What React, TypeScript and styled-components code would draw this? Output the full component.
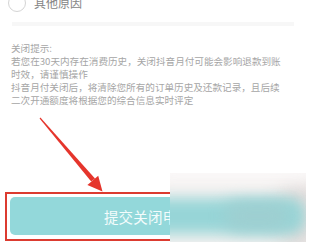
import React from "react";
import styled, { createGlobalStyle } from "styled-components";

const GlobalStyle = createGlobalStyle`
  html, body { margin: 0; padding: 0; background: #ffffff; }
  body { font-family: "Noto Sans CJK SC", "Noto Sans", sans-serif; }
`;

const Page = styled.div`
  position: relative;
  width: 306px;
  height: 242px;
  overflow: hidden;
  background: #ffffff;
  display: flex;
  flex-direction: column;
`;

const OptionRow = styled.div`
  display: flex;
  align-items: center;
  gap: 8px;
  margin-top: -7px;
  padding-left: 8px;
  height: 20px;
  flex-shrink: 0;
`;

const Radio = styled.span`
  width: 18px;
  height: 18px;
  border-radius: 50%;
  border: 1px solid #d4d4d4;
  box-sizing: border-box;
`;

const OptionLabel = styled.span`
  font-size: 12px;
  color: #858585;
  line-height: 20px;
`;

const Divider = styled.div`
  margin: 9px 12px 0;
  height: 4px;
  background: #f7f7f7;
  flex-shrink: 0;
`;

const Notice = styled.div`
  padding: 16px 0 0 11px;
  font-size: 9.6px;
  line-height: 13px;
  color: #a6a6a6;
  white-space: nowrap;
  flex-shrink: 0;
`;

const NoticePara = styled.p`
  margin: 0;
`;

const Highlight = styled.div`
  margin: auto 0 1px 5px;
  width: 286px;
  height: 49px;
  box-sizing: border-box;
  border: 2px solid #dc3b30;
  padding: 3px 3px 4px 3px;
  display: flex;
  flex-shrink: 0;
`;

const SubmitButton = styled.button`
  flex: 1;
  border: none;
  border-radius: 5px;
  background: #93d8da;
  color: #f4fcfc;
  font-family: "Noto Sans CJK SC", sans-serif;
  font-size: 14.5px;
  letter-spacing: 0.2px;
  padding: 0;
  cursor: pointer;
`;

const Arrow = styled.svg`
  position: absolute;
  left: 0;
  top: 0;
  pointer-events: none;
`;

const BlurMask = styled.div`
  position: absolute;
  left: 170px;
  top: 173px;
  right: 0;
  bottom: 0;
  overflow: hidden;
  background: #f4f1f0;
`;

const BlurBlob = styled.div<{ $l: number; $t: number; $w: number; $h: number; $c: string; $b: number }>`
  position: absolute;
  left: ${(p) => p.$l}px;
  top: ${(p) => p.$t}px;
  width: ${(p) => p.$w}px;
  height: ${(p) => p.$h}px;
  background: ${(p) => p.$c};
  filter: blur(${(p) => p.$b}px);
  border-radius: 14px;
`;

export default function App() {
  return (
    <>
      <GlobalStyle />
      <Page>
        <OptionRow>
          <Radio />
          <OptionLabel>其他原因</OptionLabel>
        </OptionRow>
        <Divider />
        <Notice>
          <NoticePara>关闭提示:</NoticePara>
          <NoticePara>
            若您在30天内存在消费历史，关闭抖音月付可能会影响退款到账
            <br />
            时效，请谨慎操作
          </NoticePara>
          <NoticePara>
            抖音月付关闭后，将清除您所有的订单历史及还款记录，且后续
            <br />
            二次开通额度将根据您的综合信息实时评定
          </NoticePara>
        </Notice>
        <Highlight>
          <SubmitButton>提交关闭申请</SubmitButton>
        </Highlight>
        <Arrow width="306" height="242" viewBox="0 0 306 242">
          <polygon
            points="40.4,117.6 95,178.4 91.2,181.6 39.6,118.4"
            fill="#e5352c"
          />
          <polygon points="102.5,191.5 98.2,175.8 87.4,184.9" fill="#e5352c" />
        </Arrow>
        <BlurMask>
          <BlurBlob $l={110} $t={8} $w={40} $h={70} $c="#e2dcdb" $b={10} />
          <BlurBlob $l={-30} $t={25} $w={165} $h={36} $c="#97d5d7" $b={7} />
          <BlurBlob $l={55} $t={28} $w={65} $h={30} $c="#9ecfd1" $b={8} />
          <BlurBlob $l={-20} $t={-12} $w={170} $h={20} $c="#fbf9f9" $b={8} />
        </BlurMask>
      </Page>
    </>
  );
}
